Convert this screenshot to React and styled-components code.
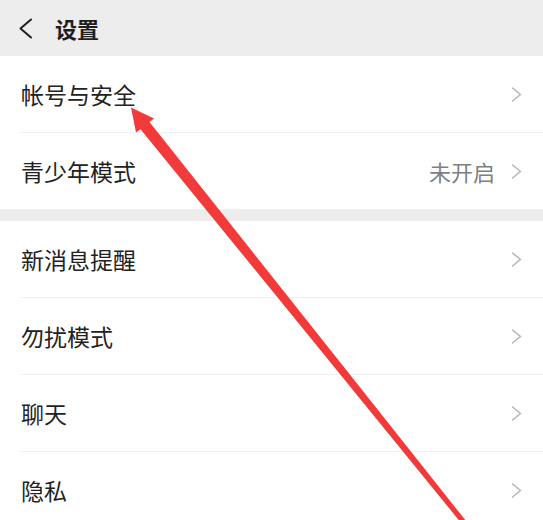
import React from "react";
import styled, { createGlobalStyle } from "styled-components";

const GlobalStyle = createGlobalStyle`
  html, body {
    margin: 0;
    padding: 0;
    overflow: hidden;
    background: #ededed;
  }

  body {
    font-family: "Noto Sans CJK SC", "Noto Sans", sans-serif;
  }
`;

const sections = [
  [
    { label: "帐号与安全" },
    { label: "青少年模式", hint: "未开启" },
  ],
  [
    { label: "新消息提醒" },
    { label: "勿扰模式" },
    { label: "聊天" },
    { label: "隐私" },
  ],
];

export default function App() {
  return (
    <Page>
      <GlobalStyle />
      <Header>
        <BackIcon viewBox="0 0 15 21">
          <polyline points="13,1.5 2.5,10.5 13,19.5" />
        </BackIcon>
        <Title>设置</Title>
      </Header>

      {sections.map((items, i) => (
        <Section key={i}>
          {items.map((item, j) => (
            <Row key={item.label}>
              <RowInner last={j === items.length - 1}>
                <Label>{item.label}</Label>
                <Right>
                  {item.hint && <Hint>{item.hint}</Hint>}
                  <Chevron viewBox="0 0 11 15">
                    <polyline points="1.5,1 9.5,7.5 1.5,14" />
                  </Chevron>
                </Right>
              </RowInner>
            </Row>
          ))}
        </Section>
      ))}

      {/* red annotation arrow drawn over the screenshot */}
      <Arrow viewBox="0 0 543 520">
        <polygon points="131,107.5 154,118.5 149.5,122 468,523.5 464,526.5 140.5,129.2 136,132.5" />
      </Arrow>
    </Page>
  );
}

const Page = styled.div`
  width: 543px;
  height: 520px;

  position: relative;
  overflow: hidden;

  background-color: #ededed;
`;

const Header = styled.div`
  height: 56px;

  display: flex;
  align-items: center;

  padding-left: 18px;
  box-sizing: border-box;

  background-color: #ededed;
`;

const BackIcon = styled.svg`
  width: 15px;
  height: 21px;

  margin-right: 22px;

  fill: none;
  stroke: #1f1f1f;
  stroke-width: 2;
  stroke-linecap: round;
  stroke-linejoin: round;
`;

const Title = styled.div`
  font-size: 22px;
  font-weight: 700;
  color: #1f1f1f;
  line-height: 1;
`;

const Section = styled.div`
  background-color: #ffffff;

  & + & {
    margin-top: 12px;
  }
`;

const Row = styled.div`
  padding-left: 21px;
`;

const RowInner = styled.div`
  height: 76px;

  display: flex;
  justify-content: space-between;
  align-items: center;

  padding-right: 21px;

  border-bottom: ${(props) => (props.last ? "none" : "1px solid #f0f0f0")};
`;

const Label = styled.div`
  font-size: 23px;
  color: #222222;
  line-height: 1;
`;

const Right = styled.div`
  display: flex;
  align-items: center;
  gap: 16px;
`;

const Hint = styled.div`
  font-size: 22px;
  color: #7f7f7f;
  line-height: 1;
`;

const Chevron = styled.svg`
  width: 11px;
  height: 15px;

  fill: none;
  stroke: #b3b3b3;
  stroke-width: 1.5;
  stroke-linecap: round;
  stroke-linejoin: round;
`;

const Arrow = styled.svg`
  position: absolute;
  top: 0;
  left: 0;

  width: 543px;
  height: 520px;

  pointer-events: none;

  polygon {
    fill: #f23a3a;
  }
`;
